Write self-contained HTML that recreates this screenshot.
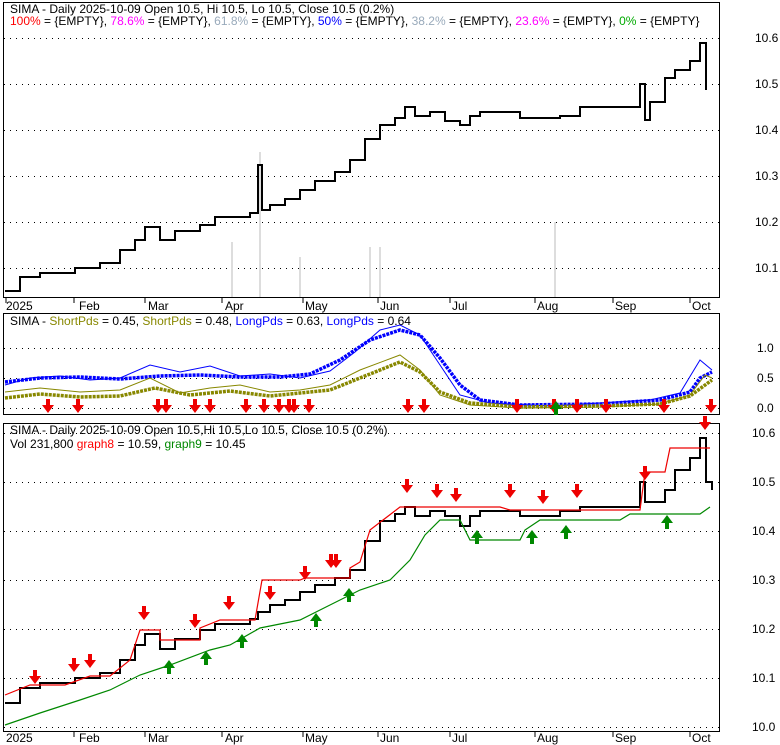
<!DOCTYPE html>
<html><head><style>body{margin:0;background:#fff}svg{display:block;font-family:"Liberation Sans",sans-serif}</style></head><body>
<svg width="780" height="745" viewBox="0 0 780 745" xmlns="http://www.w3.org/2000/svg">
<defs>
<g id="dn"><path d="M-2,-8h4v6h4l-6,8l-6,-8h4z" fill="#e00"/></g>
<g id="up"><path d="M-2,8h4v-6h4l-6,-8l-6,8h4z" fill="#080"/></g>
</defs>
<g fill="none" stroke="#000" stroke-width="1">
<path d="M3.5,2.5h716v295h-716z"/>
<path d="M3.5,313.5h716v101h-716z"/>
<path d="M3.5,423.5h716v308h-716z"/>
</g>
<g stroke="#000" stroke-dasharray="1,5" stroke-width="1">
<path d="M4,38.5h715M4,84.5h715M4,130.5h715M4,176.5h715M4,222.5h715M4,268.5h715"/>
<path d="M4,348.5h715M4,378.5h715M4,408.5h715"/>
<path d="M4,433.5h715M4,482.5h715M4,531.5h715M4,580.5h715M4,629.5h715M4,678.5h715M4,727.5h715"/>
</g>
<g font-size="12" fill="#000">
<text x="755" y="42">10.6</text><text x="755" y="88">10.5</text><text x="755" y="134">10.4</text><text x="755" y="180">10.3</text><text x="755" y="226">10.2</text><text x="755" y="272">10.1</text>
<text x="757" y="352">1.0</text><text x="757" y="382">0.5</text><text x="757" y="412">0.0</text>
<text x="752" y="437">10.6</text><text x="752" y="486">10.5</text><text x="752" y="535">10.4</text><text x="752" y="584">10.3</text><text x="752" y="633">10.2</text><text x="752" y="682">10.1</text><text x="752" y="731">10.0</text>
</g>
<g font-size="12" fill="#000">
<text x="6" y="310">2025</text><text x="79" y="310">Feb</text><text x="148" y="310">Mar</text><text x="225" y="310">Apr</text><text x="305" y="310">May</text><text x="380" y="310">Jun</text><text x="452" y="310">Jul</text><text x="537" y="310">Aug</text><text x="615" y="310">Sep</text><text x="692" y="310">Oct</text>
<text x="6" y="742">2025</text><text x="79" y="742">Feb</text><text x="148" y="742">Mar</text><text x="225" y="742">Apr</text><text x="305" y="742">May</text><text x="380" y="742">Jun</text><text x="452" y="742">Jul</text><text x="537" y="742">Aug</text><text x="615" y="742">Sep</text><text x="692" y="742">Oct</text>
</g>
<g stroke="#000"><path d="M6,298v5M74,298v5M145,298v5M222,298v5M303,298v5M378,298v5M450,298v5M535,298v5M613,298v5M690,298v5M74,732v5M145,732v5M222,732v5M303,732v5M378,732v5M450,732v5M535,732v5M613,732v5M690,732v5"/></g>
<g font-size="12">
<text x="10" y="13" fill="#000">SIMA - Daily 2025-10-09 Open 10.5, Hi 10.5, Lo 10.5, Close 10.5 (0.2%)</text>
<text x="10" y="25"><tspan fill="#f00">100%</tspan> = {EMPTY}, <tspan fill="#f0f">78.6%</tspan> = {EMPTY}, <tspan fill="#9ab">61.8%</tspan> = {EMPTY}, <tspan fill="#00f">50%</tspan> = {EMPTY}, <tspan fill="#9ab">38.2%</tspan> = {EMPTY}, <tspan fill="#f0f">23.6%</tspan> = {EMPTY}, <tspan fill="#0a0">0%</tspan> = {EMPTY}</text>
<text x="10" y="325">SIMA - <tspan fill="#880">ShortPds</tspan> = 0.45, <tspan fill="#880">ShortPds</tspan> = 0.48, <tspan fill="#00f">LongPds</tspan> = 0.63, <tspan fill="#00f">LongPds</tspan> = 0.64</text>
<text x="10" y="434">SIMA - Daily 2025-10-09 Open 10.5,Hi 10.5,Lo 10.5, Close 10.5 (0.2%)</text>
<text x="10" y="448">Vol 231,800 <tspan fill="#f00">graph8</tspan> = 10.59, <tspan fill="#080">graph9</tspan> = 10.45</text>
</g>
<g stroke="#ddd" stroke-width="2"><path d="M232,297v-55M260,297v-145M300,297v-40M370,297v-50M380,297v-50M555,297v-75"/></g>
<g fill="none" stroke="#000" stroke-width="2">
<path d="M5,291H20V277H40V273H75V268H100V263H120V250H135V240H145V227H160V240H175V231H200V225H215V217H250V213H258V165H262V210H270V205H285V199H300V190H315V181H335V172H350V160H365V139H380V125H395V118H405V107H415V116H430V112H445V121H460V125H470V116H480V112H520V118H560V116H580V107H620V107H640V84H645V120H650V102H665V78H675V70H690V61H700V43H706V90"/>
<path d="M5,703H20V688H40V683H75V678H100V673H120V660H135V645H145V634H160V649H175V639H200V630H215V624H250V619H258V612H270V605H285V600H300V592H315V585H335V578H350V570H365V541H380V521H395V514H405V507H415V516H430V511H445V516H460V526H470V516H480V511H520V516H560V511H580V507H620V507H640V482H645V502H650V502H665V490H675V470H690V458H700V438H706V482H712V490"/>
</g>
<path d="M5,695L30,685H65L90,676H110L130,660L140,630H160V640H200V628L220,620H255L262,580H300L305,578H350V568L360,562L370,530L400,507H500L510,510H640L645,472H665L670,448H710" fill="none" stroke="#e00" stroke-width="1.2"/>
<path d="M5,725L40,713L80,700L110,690L140,675L170,665L210,650L230,645L260,628L300,620L330,605L360,590L390,580L410,560L425,535L440,520H460L470,540H520L525,530L540,520H620L630,514H700L710,507" fill="none" stroke="#080" stroke-width="1.2"/>
<path d="M5,385L30,378L60,376L90,380L120,378L150,365L180,372L210,366L240,376L270,374L300,378L330,371L355,352L380,330L400,325L420,335L440,365L460,395L490,403L550,406L600,403L650,400L680,393L700,360L712,370" fill="none" stroke="#00f" stroke-width="1"/>
<path d="M5,382L40,378L80,377L120,379L160,376L200,375L240,377L280,377L310,374L340,360L370,340L400,330L420,335L440,358L460,385L480,400L520,405L600,404L660,400L690,392L700,378L712,372" fill="none" stroke="#00f" stroke-width="3.5" stroke-dasharray="3,1"/>
<path d="M5,392L40,388L80,392L120,390L150,378L180,393L210,388L240,385L270,392L300,390L330,385L360,370L400,355L420,370L440,395L470,405L520,408L600,407L660,404L690,395L705,375L712,378" fill="none" stroke="#880" stroke-width="1"/>
<path d="M5,398L40,394L80,397L120,396L155,388L190,395L230,391L270,396L300,393L330,390L360,378L400,362L420,372L440,392L470,403L520,407L600,406L660,404L690,396L712,380" fill="none" stroke="#880" stroke-width="3.5" stroke-dasharray="3,1"/>
<g>
<use href="#dn" x="48" y="407"/><use href="#dn" x="78" y="407"/><use href="#dn" x="158" y="407"/><use href="#dn" x="166" y="407"/><use href="#dn" x="195" y="407"/><use href="#dn" x="210" y="407"/><use href="#dn" x="246" y="407"/><use href="#dn" x="264" y="407"/><use href="#dn" x="279" y="407"/><use href="#dn" x="289" y="407"/><use href="#dn" x="294" y="407"/><use href="#dn" x="309" y="407"/><use href="#dn" x="408" y="407"/><use href="#dn" x="424" y="407"/><use href="#dn" x="517" y="407"/><use href="#dn" x="554" y="407"/><use href="#dn" x="577" y="407"/><use href="#dn" x="606" y="407"/><use href="#dn" x="664" y="407"/><use href="#dn" x="711" y="407"/>
<use href="#up" x="556" y="407"/>
<use href="#dn" x="35" y="678"/><use href="#dn" x="74" y="666"/><use href="#dn" x="90" y="662"/><use href="#dn" x="144" y="614"/><use href="#dn" x="195" y="622"/><use href="#dn" x="229" y="604"/><use href="#dn" x="270" y="594"/><use href="#dn" x="305" y="574"/><use href="#dn" x="331" y="562"/><use href="#dn" x="336" y="562"/><use href="#dn" x="407" y="487"/><use href="#dn" x="437" y="492"/><use href="#dn" x="456" y="496"/><use href="#dn" x="510" y="492"/><use href="#dn" x="543" y="498"/><use href="#dn" x="577" y="492"/><use href="#dn" x="645" y="474"/><use href="#dn" x="705" y="424"/>
<use href="#up" x="169" y="666"/><use href="#up" x="206" y="657"/><use href="#up" x="242" y="640"/><use href="#up" x="316" y="619"/><use href="#up" x="349" y="594"/><use href="#up" x="477" y="536"/><use href="#up" x="532" y="536"/><use href="#up" x="566" y="531"/><use href="#up" x="667" y="521"/>
</g>
</svg>
</body></html>
